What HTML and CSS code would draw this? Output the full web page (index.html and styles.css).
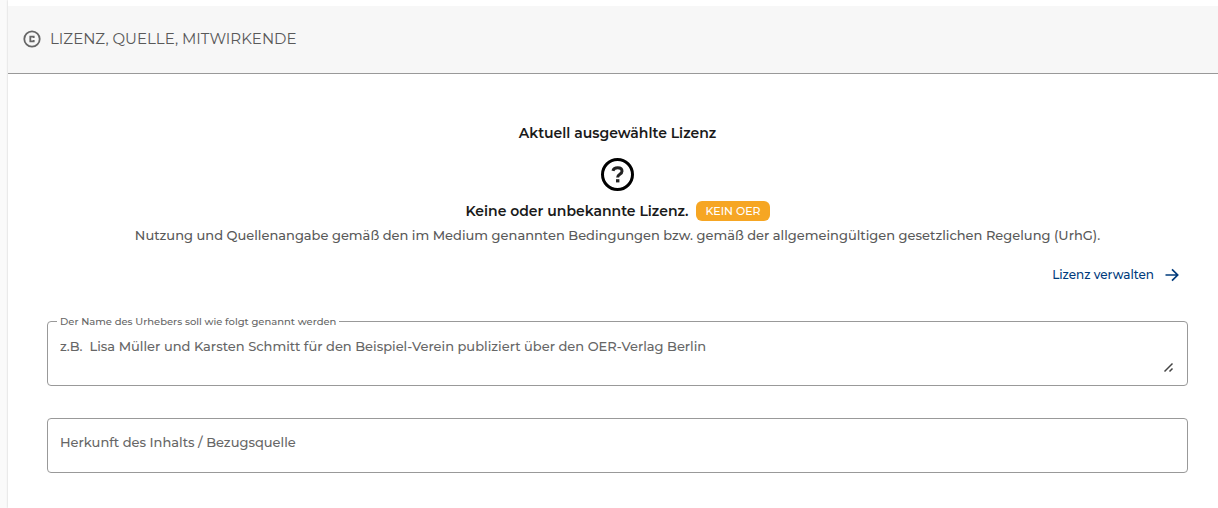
FILE: index.html
```html
<!DOCTYPE html>
<html lang="de">
<head>
    <meta charset="UTF-8" />
    <meta name="viewport" content="width=device-width, initial-scale=1" />
    <title>Lizenz, Quelle, Mitwirkende</title>
    <link rel="stylesheet" href="styles.css">
</head>
<body>
    <main class="panel">
        <header class="panel-header">
            <svg class="header-icon" viewBox="0 0 18 18" aria-hidden="true">
                <circle cx="9" cy="9" r="7.7" />
                <path d="M10.7 8V6.6H7.3v4.8h3.4V10" />
            </svg>
            <h1>LIZENZ, QUELLE, MITWIRKENDE</h1>
        </header>

        <form class="content">
            <section class="license">
                <h2>Aktuell ausgewählte Lizenz</h2>
                <svg class="license-icon" viewBox="0 0 33 33" aria-hidden="true">
                    <circle cx="16.5" cy="16.5" r="15" />
                    <path d="M11.9 12.9C12.5 10.9 14.2 9.8 16.7 9.8C19.5 9.8 21 11.2 21 13.2C21 16.4 16.6 16.1 16.6 19.5" />
                    <rect x="15" y="21.2" width="3.4" height="3.2" />
                </svg>
                <div class="license-name">
                    <strong>Keine oder unbekannte Lizenz.</strong>
                    <span class="badge">KEIN OER</span>
                </div>
                <p>Nutzung und Quellenangabe gemäß den im Medium genannten Bedingungen bzw. gemäß der allgemeingültigen gesetzlichen Regelung (UrhG).</p>
            </section>

            <a href="#" class="manage">
                Lizenz verwalten
                <svg viewBox="0 0 16 16" aria-hidden="true">
                    <path d="M1.5 8h12M8 2.3l5.7 5.7L8 13.7" />
                </svg>
            </a>

            <div class="field field-author">
                <label for="author">Der Name des Urhebers soll wie folgt genannt werden</label>
                <textarea id="author" rows="1" placeholder="z.B.  Lisa Müller und Karsten Schmitt für den Beispiel-Verein publiziert über den OER-Verlag Berlin"></textarea>
            </div>

            <div class="field field-source">
                <label for="source">Herkunft des Inhalts / Bezugsquelle</label>
                <input type="text" id="source" />
            </div>
        </form>
    </main>
</body>
</html>
```

FILE: styles.css
```css
* {
    box-sizing: border-box;
}
body {
    margin: 0;
    padding-left: 8px;
    background: #fafafa;
    font-family: Montserrat, Inter, "Open Sans", sans-serif;
    font-size: 13px;
    font-weight: 500;
    line-height: 24px;
    color: #595959;
}
h1, h2, p {
    margin: 0;
}
.panel {
    min-height: 100vh;
    padding-top: 6px;
    background: #fff;
    box-shadow: 0 0 2px rgba(0, 0, 0, 0.2);
}
.panel-header {
    display: flex;
    align-items: center;
    gap: 9px;
    height: 68px;
    padding: 0 15px 2px;
    background: #f7f7f7;
    border-bottom: 1px solid #999;
}
.panel-header h1 {
    font-size: 15px;
    font-weight: 400;
}
.header-icon {
    width: 18px;
    height: 18px;
    fill: none;
    stroke: #666;
    stroke-width: 1.8;
}
.content {
    display: flex;
    flex-direction: column;
    padding: 47px 30px 35px 39px;
}
.license {
    display: flex;
    flex-direction: column;
    align-items: center;
    text-align: center;
}
.license h2,
.license strong {
    font-size: 14px;
    font-weight: 600;
    color: #1a1a1a;
}
.license-icon {
    width: 33px;
    height: 33px;
    margin: 13px 0 8px;
    fill: none;
    stroke: #000;
    stroke-width: 3;
}
.license-icon path {
    stroke: #222;
}
.license-icon rect {
    fill: #222;
    stroke: none;
}
.license-name {
    display: flex;
    align-items: center;
    gap: 8px;
}
.badge {
    padding: 0 9px;
    border-radius: 6px;
    background: #f6a623;
    color: #fff;
    font-size: 11px;
    font-weight: 500;
    line-height: 20px;
}
.manage {
    display: flex;
    align-items: center;
    align-self: flex-end;
    gap: 10px;
    margin: 16px 8px 34px 0;
    color: #003b7c;
    font-size: 12px;
    text-decoration: none;
}
.manage svg {
    width: 16px;
    height: 16px;
    fill: none;
    stroke: currentColor;
    stroke-width: 1.7;
}
.field {
    position: relative;
    border: 1px solid #999;
    border-radius: 4px;
}
.field label {
    position: absolute;
    color: #666;
}
.field input,
.field textarea {
    display: block;
    width: 100%;
    border: 0;
    outline: 0;
    background: transparent;
    color: #333;
    font: inherit;
}
.field ::placeholder {
    color: #666;
    opacity: 1;
}
.field-author {
    margin-bottom: 32px;
    padding: 12px;
}
.field-author label {
    top: -8px;
    left: 9px;
    padding: 0 3px;
    background: #fff;
    font-size: 10px;
    line-height: 16px;
}
.field-author textarea {
    height: 39px;
    padding: 0;
    resize: vertical;
}
.field-author textarea::-webkit-resizer {
    background: url("data:image/svg+xml,%3Csvg xmlns='http://www.w3.org/2000/svg' width='15' height='15'%3E%3Cpath d='M4.5 13.5l8-8M9.5 13.5l3-3' stroke='%23444' stroke-width='1.5'/%3E%3C/svg%3E") no-repeat;
}
.field-source label {
    top: 11px;
    left: 12px;
    pointer-events: none;
}
.field-source input {
    height: 53px;
    padding: 0 12px;
}
```
